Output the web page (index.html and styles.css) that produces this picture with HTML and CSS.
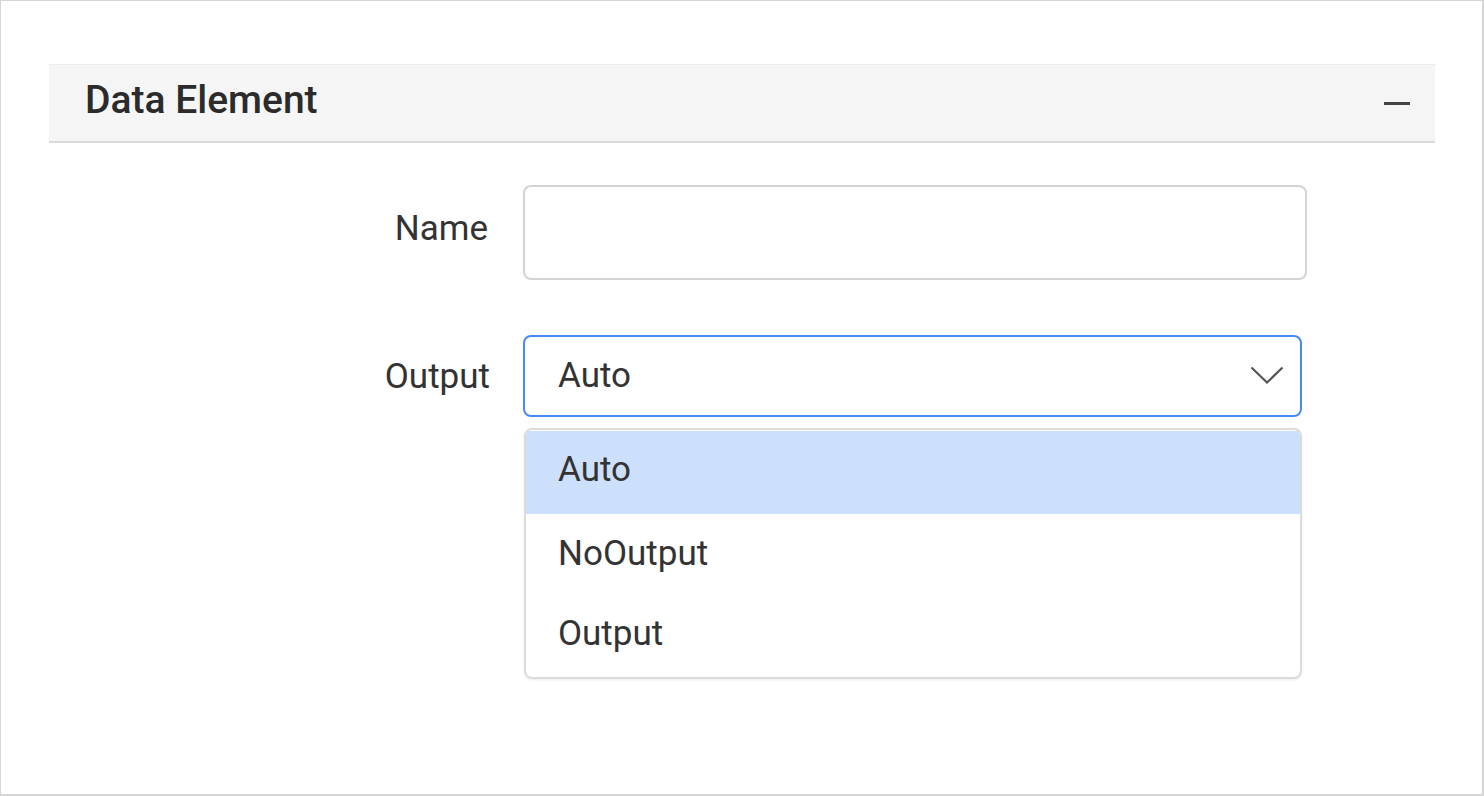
FILE: index.html
```html
<!DOCTYPE html>
<html lang="en">

<head>
    <meta charset="UTF-8">
    <meta name="viewport" content="width=device-width, initial-scale=1.0">
    <title>Data Element</title>
    <link rel="stylesheet" href="styles.css">
</head>

<body>
    <div class="frame">
        <div class="panel">
            <!-- 标题栏 -->
            <div class="panel-head">
                <span class="panel-title">Data Element</span>
                <span class="collapse"></span>
            </div>
            <!-- 表单 -->
            <div class="form">
                <label class="label label-name">Name</label>
                <div class="field">
                    <div class="textbox"></div>
                </div>

                <label class="label">Output</label>
                <div class="field">
                    <div class="select">
                        <span class="select-value">Auto</span>
                        <svg class="chevron" width="34" height="19" viewBox="0 0 34 19">
                            <path d="M1.5 1.5 L17 16.5 L32.5 1.5" fill="none" stroke="#555" stroke-width="2.2"/>
                        </svg>
                    </div>
                    <!-- 下拉列表 -->
                    <ul class="popup">
                        <li class="active">Auto</li>
                        <li>NoOutput</li>
                        <li>Output</li>
                    </ul>
                </div>
            </div>
        </div>
    </div>
</body>

</html>
```

FILE: styles.css
```css
* {
    margin: 0;
    padding: 0;
    box-sizing: border-box;
}

ul {
    list-style: none;
}

body {
    font-family: Roboto, "Liberation Sans", sans-serif;
    color: #333;
    background: #fff;
}

.frame {
    width: 1484px;
    height: 796px;
    border: 1px solid #d6d6d6;
    border-right-width: 2px;
    border-bottom-width: 2px;
    padding: 63px 0 0 48px;
}

.panel {
    width: 1386px;
}

.panel-head {
    display: flex;
    align-items: center;
    justify-content: space-between;
    height: 79px;
    padding: 0 25px 6px 36px;
    background: #f5f5f5;
    border-top: 1px solid #ececec;
    border-bottom: 2px solid #d9d9d9;
}

.panel-title {
    font-size: 39px;
    font-weight: 500;
    color: #2b2b2b;
}

.collapse {
    width: 26px;
    height: 3px;
    margin-top: 6px;
    background: #444;
}

.form {
    display: grid;
    grid-template-columns: 441px auto;
    column-gap: 33px;
    row-gap: 55px;
    align-items: center;
    padding-top: 42px;
}

.label {
    text-align: right;
    font-size: 35px;
    color: #333;
}

.label-name {
    padding-right: 2px;
    padding-bottom: 8px;
}

.field {
    position: relative;
}

.textbox {
    width: 784px;
    height: 95px;
    border: 2px solid #d4d4d4;
    border-radius: 8px;
}

.select {
    display: flex;
    align-items: center;
    justify-content: space-between;
    width: 779px;
    height: 82px;
    padding: 0 16px 2px 33px;
    border: 2px solid #4a89f3;
    border-radius: 8px;
    font-size: 35px;
}

.chevron {
    display: block;
}

/* 下拉列表 */
.popup {
    position: absolute;
    top: calc(100% + 11px);
    left: 1px;
    width: 778px;
    padding: 1px 0 3px;
    border: 2px solid #dcdcdc;
    border-radius: 8px;
    background: #fff;
    box-shadow: 0 1px 3px rgba(0, 0, 0, 0.08);
    overflow: hidden;
    font-size: 35px;
}

.popup li {
    height: 80px;
    line-height: 80px;
    padding-left: 32px;
}

.popup li.active {
    height: 83px;
    line-height: 77px;
    background: #cde0fb;
}
```
